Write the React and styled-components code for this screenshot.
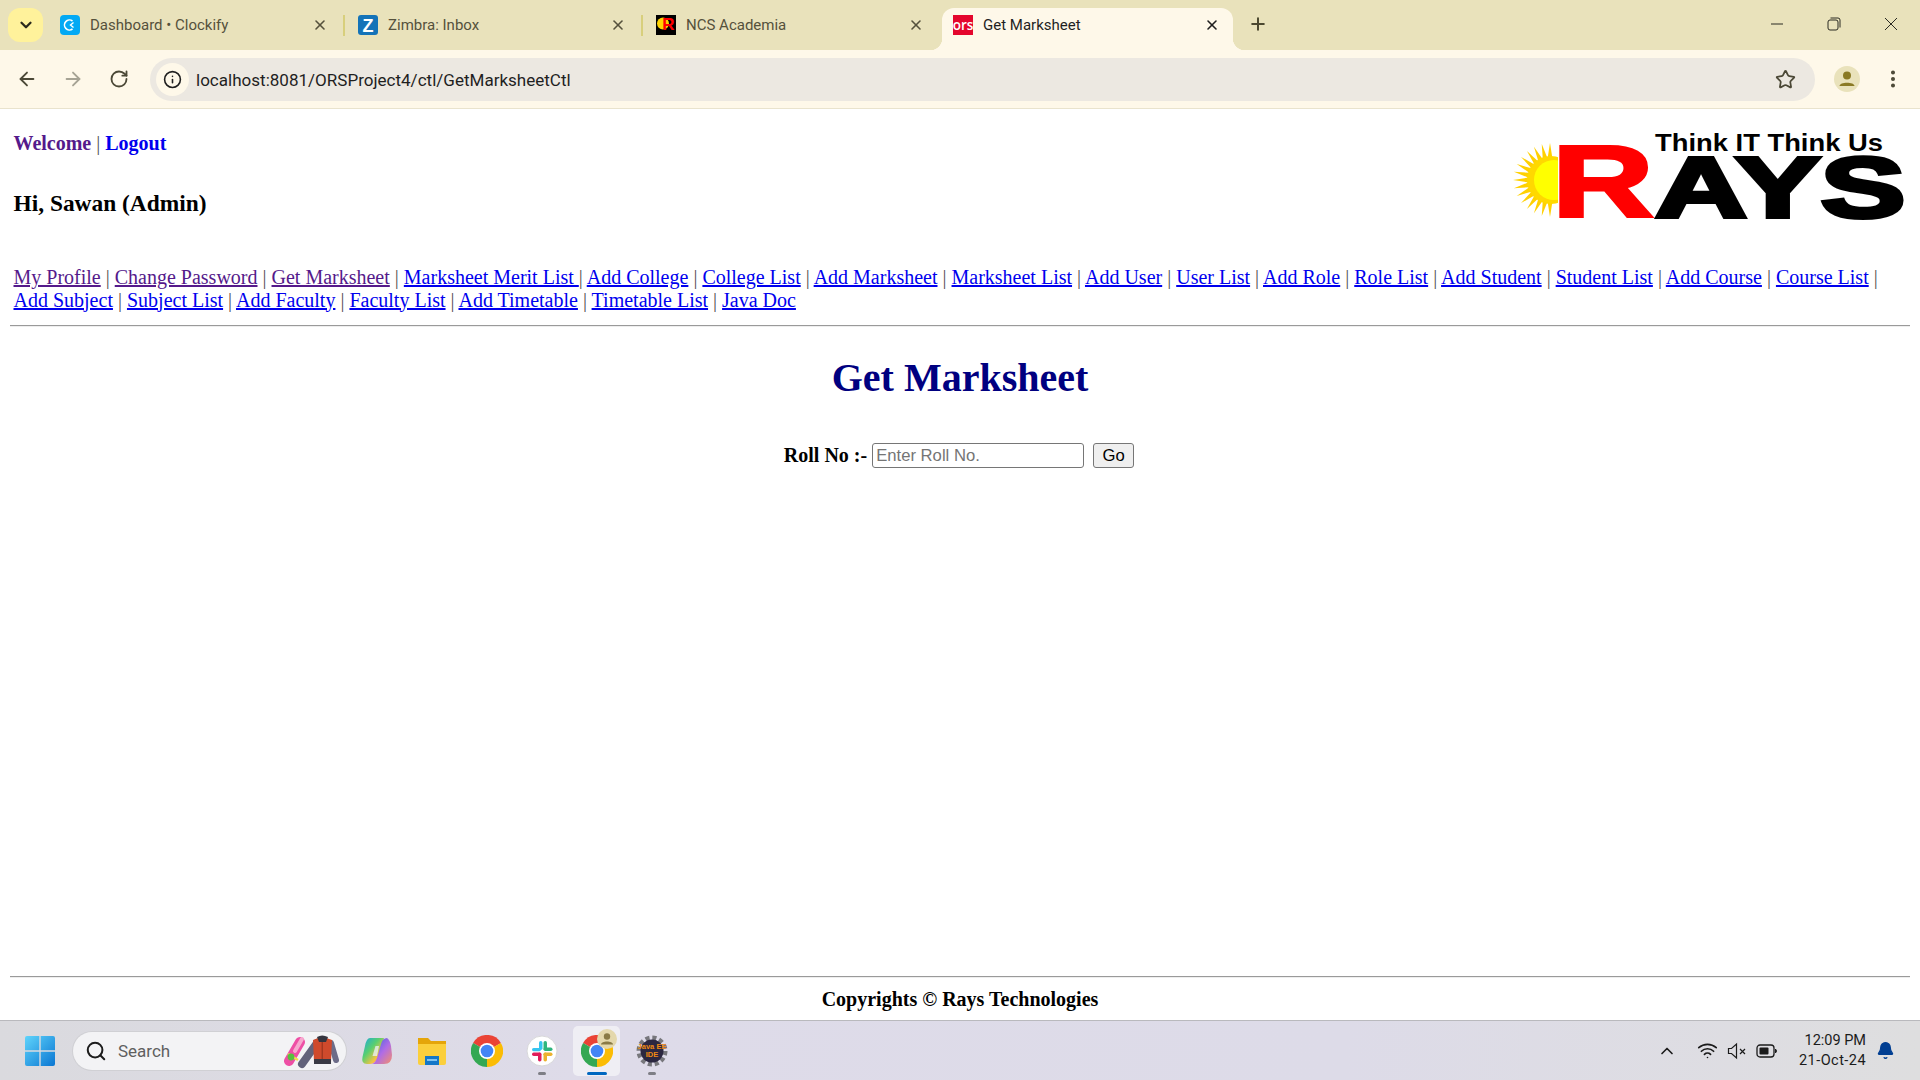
import styled, { createGlobalStyle } from "styled-components";
import {
  ArrowLeft,
  ArrowRight,
  RotateCw,
  Info,
  Star,
  EllipsisVertical,
  X,
  Plus,
  ChevronDown,
  ChevronUp,
  Search,
  Wifi,
  Bell,
} from "lucide-react";

const GlobalStyle = createGlobalStyle`
  html, body {
    margin: 0;
    padding: 0;
    height: 100%;
    background: #fff;
    overflow: hidden;
  }
  * { box-sizing: border-box; }
`;

const Screen = styled.div`
  width: 1920px;
  height: 1080px;
  display: flex;
  flex-direction: column;
`;

/* ---------- browser chrome ---------- */

const TabStrip = styled.div`
  height: 50px;
  flex: none;
  display: flex;
  align-items: flex-start;
  padding: 0 1px 0 8px;
  background: #e9e2bb;
  font-family: Roboto, "Open Sans", sans-serif;
  font-size: 15px;
`;

const TabSearch = styled.div`
  width: 35px;
  height: 34px;
  margin: 8px 5px 0 0;
  display: flex;
  align-items: center;
  justify-content: center;
  border-radius: 12px;
  background: #fff29b;
  color: #2b2a1c;
`;

const Tab = styled.div`
  position: relative;
  width: ${(p) => (p.$active ? "291px" : "298px")};
  height: 42px;
  margin-top: 8px;
  display: flex;
  align-items: center;
  gap: 10px;
  padding: 0 ${(p) => (p.$active ? "13px" : "18px")} 8px ${(p) => (p.$active ? "11px" : "12px")};
  border-radius: 12px 12px 0 0;
  background: ${(p) => (p.$active ? "#fef8e9" : "transparent")};
  color: ${(p) => (p.$active ? "#1f1f1f" : "#55513c")};

  ${(p) =>
    p.$sep &&
    `&::after {
      content: "";
      position: absolute;
      right: 1px;
      top: 7px;
      width: 2px;
      height: 21px;
      background: #d8cf7c;
    }`}

  ${(p) =>
    p.$active &&
    `&::before, &::after {
      content: "";
      position: absolute;
      bottom: 0;
      width: 12px;
      height: 12px;
    }
    &::before {
      left: -12px;
      background: radial-gradient(circle at 0 0, transparent 12px, #fef8e9 12.5px);
    }
    &::after {
      right: -12px;
      background: radial-gradient(circle at 100% 0, transparent 12px, #fef8e9 12.5px);
    }`}
`;

const TabTitle = styled.span`
  flex: 1;
  white-space: nowrap;
`;

const Favicon = styled.svg`
  width: 20px;
  height: 20px;
  flex: none;
`;

const TabClose = styled(X)`
  width: 16px;
  height: 16px;
  flex: none;
  stroke-width: 2.4;
`;

const NewTab = styled.div`
  margin: 14px 0 0 15px;
  width: 20px;
  height: 20px;
  color: #4c4830;
  display: flex;
`;

const WindowControls = styled.div`
  margin-left: auto;
  display: flex;
  color: #2a2a22;
`;

const WindowButton = styled.div`
  width: 57px;
  height: 48px;
  display: flex;
  align-items: center;
  justify-content: center;
`;

const Toolbar = styled.div`
  height: 59px;
  flex: none;
  display: flex;
  align-items: center;
  padding: 0 4px;
  background: #fef8e9;
  border-bottom: 1px solid #e9e3cd;
`;

const ToolButton = styled.div`
  width: 46px;
  height: 46px;
  flex: none;
  display: flex;
  align-items: center;
  justify-content: center;
  color: ${(p) => (p.$muted ? "#a6a394" : "#4b4836")};
`;

const AddressBar = styled.div`
  flex: 1;
  height: 43px;
  margin: 0 9px 0 8px;
  display: flex;
  align-items: center;
  gap: 7px;
  padding: 0 19px 0 6px;
  border-radius: 22px;
  background: #ece8e1;
`;

const InfoChip = styled.div`
  width: 33px;
  height: 33px;
  flex: none;
  border-radius: 50%;
  display: flex;
  align-items: center;
  justify-content: center;
  background: #fef8e9;
  color: #1f1f1f;
`;

const Url = styled.span`
  flex: 1;
  padding-top: 1px;
  font-family: Roboto, "Open Sans", sans-serif;
  font-size: 17.05px;
  color: #1f1f1f;
  white-space: nowrap;
`;

const Avatar = styled.svg`
  width: 26px;
  height: 26px;
`;

/* ---------- page ---------- */

const Page = styled.div`
  flex: 1;
  min-height: 0;
  display: flex;
  flex-direction: column;
  padding: 0 10px;
  background: #fff;
  color: #000;
  font-family: "Liberation Serif", "Times New Roman", serif;
  font-size: 20px;
`;

const Header = styled.div`
  display: flex;
  justify-content: space-between;
  align-items: flex-start;
  padding-left: 3.5px;
`;

const UserBox = styled.div`
  padding-top: 23px;
`;

const WelcomeLine = styled.div`
  font-weight: 700;
  line-height: 23px;
`;

const PlainLink = styled.a`
  color: ${(p) => (p.$visited ? "#551a8b" : "#0000ee")};
  text-decoration: none;
`;

const Pipe = styled.span`
  color: #555;
  font-weight: 400;
`;

const Greeting = styled.h3`
  margin: 35px 0 0;
  font-size: 23.4px;
  line-height: 27px;
  font-weight: 700;
`;

const Logo = styled.svg`
  width: 397px;
  height: 126px;
  margin-top: 4px;
  flex: none;
`;

const Nav = styled.nav`
  margin-top: 27px;
  padding-left: 3.5px;
  line-height: 22.5px;
`;

const NavLink = styled.a`
  color: ${(p) => (p.$visited ? "#551a8b" : "#0000ee")};
  text-decoration: underline;
`;

const Rule = styled.hr`
  width: 100%;
  height: 2px;
  margin: ${(p) => p.$margin};
  border: none;
  border-top: 1px solid #9a9a9a;
  border-bottom: 1px solid #eeeeee;
`;

const Title = styled.h1`
  margin: 28px 0 0;
  font-size: 40px;
  line-height: 46px;
  font-weight: 700;
  color: #000080;
  text-align: center;
`;

const RollRow = styled.form`
  margin-top: 42px;
  padding-right: 2px;
  display: flex;
  align-items: center;
  justify-content: center;
`;

const RollLabel = styled.label`
  font-weight: 700;
  margin-right: 5px;
`;

const RollInput = styled.input`
  width: 212px;
  height: 25px;
  padding: 1px 3px;
  border: 1px solid #767676;
  border-radius: 3px;
  font-family: "Liberation Sans", Arial, sans-serif;
  font-size: 16.67px;
  &::placeholder {
    color: #757575;
  }
`;

const GoButton = styled.button`
  width: 41px;
  height: 25px;
  margin-left: 9px;
  padding: 0;
  border: 1px solid #767676;
  border-radius: 3px;
  background: #efefef;
  color: #000;
  font-family: "Liberation Sans", Arial, sans-serif;
  font-size: 16.67px;
`;

const Footer = styled.footer`
  margin-top: auto;
  padding-bottom: 9px;
`;

const Copyright = styled.div`
  font-weight: 700;
  line-height: 23px;
  text-align: center;
`;

/* ---------- taskbar ---------- */

const Taskbar = styled.div`
  height: 60px;
  flex: none;
  display: flex;
  align-items: center;
  padding-left: 25px;
  border-top: 1px solid #b9b9bd;
  background: linear-gradient(90deg, #dadade 0%, #dedbe9 30%, #dddbe8 70%, #dededf 100%);
  font-family: Roboto, "Open Sans", sans-serif;
`;

const SearchPill = styled.div`
  width: 273px;
  height: 38px;
  margin: 0 3px 0 18px;
  display: flex;
  align-items: center;
  gap: 10px;
  padding: 0 7px 0 12px;
  border-radius: 19px;
  background: #f3f3f5;
  box-shadow: 0 0 0 1px #d0d0d4;
  color: #1c1c1c;
`;

const SearchText = styled.span`
  flex: 1;
  padding-left: 1px;
  font-size: 17px;
  color: #5f5f5f;
`;

const AppSlot = styled.div`
  position: relative;
  width: 55px;
  height: 50px;
  display: flex;
  align-items: center;
  justify-content: center;
  border-radius: 5px;

  ${(p) =>
    p.$active &&
    `&::before {
      content: "";
      position: absolute;
      inset: 0 4px;
      border-radius: 5px;
      background: #efeef4;
    }`}
`;

const AppIcon = styled.svg`
  position: relative;
  width: 32px;
  height: 32px;
`;

const ProfileBadge = styled.svg`
  position: absolute;
  top: 3px;
  right: 7px;
  width: 20px;
  height: 20px;
`;

const AppDot = styled.span`
  position: absolute;
  bottom: 1px;
  left: 50%;
  transform: translateX(-50%);
  width: ${(p) => (p.$active ? "20px" : "8px")};
  height: 3px;
  border-radius: 2px;
  background: ${(p) => (p.$active ? "#0067c0" : "#7e7e85")};
`;

const Tray = styled.div`
  margin-left: auto;
  display: flex;
  align-items: center;
  color: #1b1b1b;
`;

const TrayIcon = styled.div`
  width: 30px;
  height: 30px;
  display: flex;
  align-items: center;
  justify-content: center;
  margin-right: ${(p) => p.$gap || "0"};
`;

const Clock = styled.div`
  width: 84px;
  text-align: right;
  font-size: 14.5px;
  line-height: 20px;
  white-space: nowrap;
  color: #1b1b1b;
`;

const ClockDate = styled.div`
  letter-spacing: 0.45px;
`;

const BellSlot = styled.div`
  width: 38px;
  margin-right: 16px;
  display: flex;
  justify-content: center;
  color: #003e92;
`;

/* ---------- drawings ---------- */

function ChromeLogo() {
  return (
    <AppIcon viewBox="0 0 32 32">
      <path d="M16 16 L2.1 8 A16 16 0 0 1 29.9 8 Z" fill="#ea4335" />
      <path d="M16 16 L29.9 8 A16 16 0 0 1 16 32 Z" fill="#fbbc04" />
      <path d="M16 16 L16 32 A16 16 0 0 1 2.1 8 Z" fill="#34a853" />
      <circle cx="16" cy="16" r="8" fill="#fff" />
      <circle cx="16" cy="16" r="6.3" fill="#4285f4" />
    </AppIcon>
  );
}

function RaysLogo() {
  const spikes = Array.from({ length: 15 }, (_, i) => {
    const a = ((i * 180) / 14 + 90) * (Math.PI / 180);
    const b = a - 0.11;
    const c = a + 0.11;
    const cx = 37;
    const cy = 47;
    return `${cx + 22 * Math.cos(b)},${cy + 22 * Math.sin(b)} ${cx + 37 * Math.cos(a)},${cy + 37 * Math.sin(a)} ${cx + 22 * Math.cos(c)},${cy + 22 * Math.sin(c)}`;
  });
  return (
    <Logo viewBox="0 -20 397 126">
      {spikes.map((pts) => (
        <polygon key={pts} points={pts} fill="#ffd000" />
      ))}
      <circle cx="38" cy="47" r="24" fill="#ffd800" />
      <circle cx="41" cy="47" r="20" fill="#ffff00" />
      <rect x="45" y="8" width="20" height="80" fill="#fff" />
      <text
        transform="translate(39 84) scale(1.38 1)"
        fontFamily="Liberation Sans"
        fontWeight="700"
        fontSize="102"
        fill="#ff0000"
        stroke="#ff0000"
        strokeWidth="3"
      >
        R
      </text>
      <text
        transform="translate(142 84) scale(1.5 1)"
        fontFamily="Liberation Sans"
        fontWeight="700"
        fontSize="85"
        fill="#000"
        stroke="#000"
        strokeWidth="4"
      >
        AYS
      </text>
      <text
        transform="translate(142 18) scale(1.19 1)"
        fontFamily="Liberation Sans"
        fontWeight="700"
        fontSize="23"
        fill="#000"
      >
        Think IT Think Us
      </text>
    </Logo>
  );
}

const NAV_LINKS = [
  { label: "My Profile", visited: true },
  { label: "Change Password", visited: true },
  { label: "Get Marksheet", visited: true },
  { label: "Marksheet Merit List " },
  { label: "Add College" },
  { label: "College List" },
  { label: "Add Marksheet" },
  { label: "Marksheet List" },
  { label: "Add User" },
  { label: "User List" },
  { label: "Add Role" },
  { label: "Role List" },
  { label: "Add Student" },
  { label: "Student List" },
  { label: "Add Course" },
  { label: "Course List" },
  { label: "Add Subject" },
  { label: "Subject List" },
  { label: "Add Faculty" },
  { label: "Faculty List" },
  { label: "Add Timetable" },
  { label: "Timetable List" },
  { label: "Java Doc" },
];

function App() {
  return (
    <Screen>
      <GlobalStyle />
      <TabStrip>
        <TabSearch>
          <ChevronDown size={18} strokeWidth={3} />
        </TabSearch>
        <Tab $sep>
          <Favicon viewBox="0 0 20 20">
            <rect width="20" height="20" rx="4" fill="#03a9f4" />
            <path d="M12.5 6 A5 5 0 1 0 12.5 14" fill="none" stroke="#fff" strokeWidth="1.6" />
            <path d="M13.5 7.5 L10.5 10 L13.5 12.5" fill="none" stroke="#fff" strokeWidth="1.4" />
          </Favicon>
          <TabTitle>Dashboard • Clockify</TabTitle>
          <TabClose />
        </Tab>
        <Tab $sep>
          <Favicon viewBox="0 0 20 20">
            <rect width="20" height="20" rx="3" fill="#1473b8" />
            <text x="10" y="16.5" textAnchor="middle" fontFamily="Liberation Sans" fontWeight="700" fontSize="18" fill="#fff">
              Z
            </text>
          </Favicon>
          <TabTitle>Zimbra: Inbox</TabTitle>
          <TabClose />
        </Tab>
        <Tab>
          <Favicon viewBox="0 0 20 20">
            <rect width="20" height="20" fill="#000" />
            <circle cx="7" cy="8.5" r="6" fill="#ffd400" />
            <text x="12.5" y="15" textAnchor="middle" fontFamily="Liberation Sans" fontWeight="700" fontSize="17" fill="#ff0000">
              R
            </text>
          </Favicon>
          <TabTitle>NCS Academia</TabTitle>
          <TabClose />
        </Tab>
        <Tab $active>
          <Favicon viewBox="0 0 20 20">
            <rect width="20" height="20" fill="#e4062d" />
            <text x="10" y="14.5" textAnchor="middle" fontFamily="Open Sans" fontWeight="600" fontSize="13.5" fill="#fff">
              ors
            </text>
          </Favicon>
          <TabTitle>Get Marksheet</TabTitle>
          <TabClose />
        </Tab>
        <NewTab>
          <Plus size={20} strokeWidth={2.4} />
        </NewTab>
        <WindowControls>
          <WindowButton>
            <svg width="14" height="14" viewBox="0 0 14 14">
              <path d="M1 7 H13" stroke="currentColor" strokeWidth="1" />
            </svg>
          </WindowButton>
          <WindowButton>
            <svg width="14" height="14" viewBox="0 0 14 14" fill="none" stroke="currentColor">
              <rect x="1" y="3" width="10" height="10" rx="2" />
              <path d="M3.5 1 H11 A2 2 0 0 1 13 3 V10.5" />
            </svg>
          </WindowButton>
          <WindowButton>
            <svg width="14" height="14" viewBox="0 0 14 14">
              <path d="M1 1 L13 13 M13 1 L1 13" stroke="currentColor" strokeWidth="1" />
            </svg>
          </WindowButton>
        </WindowControls>
      </TabStrip>

      <Toolbar>
        <ToolButton>
          <ArrowLeft size={22} />
        </ToolButton>
        <ToolButton $muted>
          <ArrowRight size={22} />
        </ToolButton>
        <ToolButton>
          <RotateCw size={20} strokeWidth={2.2} />
        </ToolButton>
        <AddressBar>
          <InfoChip>
            <Info size={19} />
          </InfoChip>
          <Url>localhost:8081/ORSProject4/ctl/GetMarksheetCtl</Url>
          <Star size={21} color="#4b4836" strokeWidth={2} />
        </AddressBar>
        <ToolButton>
          <Avatar viewBox="0 0 26 26">
            <circle cx="13" cy="13" r="13" fill="#e9e2bb" />
            <circle cx="13" cy="9.5" r="4" fill="#8a7a25" />
            <path d="M5.5 20 C5.5 15.5 20.5 15.5 20.5 20 Z" fill="#8a7a25" />
          </Avatar>
        </ToolButton>
        <ToolButton>
          <EllipsisVertical size={22} strokeWidth={2.4} />
        </ToolButton>
      </Toolbar>

      <Page>
        <Header>
          <UserBox>
            <WelcomeLine>
              <PlainLink $visited href="#">
                Welcome
              </PlainLink>{" "}
              <Pipe>|</Pipe> <PlainLink href="#">Logout</PlainLink>
            </WelcomeLine>
            <Greeting>Hi, Sawan (Admin)</Greeting>
          </UserBox>
          <RaysLogo />
        </Header>

        <Nav>
          {NAV_LINKS.map((link, i) => (
            <span key={link.label}>
              <NavLink href="#" $visited={link.visited}>
                {link.label}
              </NavLink>
              {i < NAV_LINKS.length - 1 && (
                <>
                  {link.label.endsWith(" ") ? "" : " "}
                  <Pipe>|</Pipe>{" "}
                </>
              )}
            </span>
          ))}
        </Nav>

        <Rule $margin="14px 0 0" />
        <Title>Get Marksheet</Title>

        <RollRow>
          <RollLabel>Roll No :-</RollLabel>
          <RollInput placeholder="Enter Roll No." />
          <GoButton type="button">Go</GoButton>
        </RollRow>

        <Footer>
          <Rule $margin="0 0 10px" />
          <Copyright>Copyrights © Rays Technologies</Copyright>
        </Footer>
      </Page>

      <Taskbar>
        <svg width="30" height="30" viewBox="0 0 30 30">
          <defs>
            <linearGradient id="win" x1="0" y1="0" x2="1" y2="1">
              <stop offset="0" stopColor="#5fd4fb" />
              <stop offset="1" stopColor="#0a76d2" />
            </linearGradient>
          </defs>
          <path d="M0 2 A2 2 0 0 1 2 0 H14.3 V14.3 H0 Z M15.7 0 H28 A2 2 0 0 1 30 2 V14.3 H15.7 Z M0 15.7 H14.3 V30 H2 A2 2 0 0 1 0 28 Z M15.7 15.7 H30 V28 A2 2 0 0 1 28 30 H15.7 Z" fill="url(#win)" />
        </svg>
        <SearchPill>
          <Search size={22} strokeWidth={2.2} />
          <SearchText>Search</SearchText>
          <svg width="56" height="36" viewBox="0 0 56 36" fill="none">
            <path d="M6 28 L17 9" stroke="#ee4fa5" strokeWidth="10" strokeLinecap="round" />
            <path d="M12 18 L19 6" stroke="#f7a8cf" strokeWidth="4" strokeLinecap="round" />
            <path d="M5 21 L15 27" stroke="#f4e04d" strokeWidth="2.5" />
            <circle cx="8" cy="24" r="3.4" fill="#57c03f" />
            <path d="M34 10 L19 31" stroke="#62627a" strokeWidth="8" strokeLinecap="round" />
            <path d="M48 10 L53 27" stroke="#6c6c88" strokeWidth="6" strokeLinecap="round" />
            <path d="M30 7 Q39 2 49 7 L48 29 H31 Z" fill="#cf4a2c" />
            <path d="M34 4 Q39 1 45 4 L43 9 H36 Z" fill="#34343e" />
            <path d="M31 26 H48 V31 H31 Z" fill="#3a3a44" />
            <path d="M39.2 9 V26" stroke="#8e2f1c" strokeWidth="1" />
          </svg>
        </SearchPill>
        <AppSlot>
          <AppIcon viewBox="0 0 32 32">
            <defs>
              <linearGradient id="cop" x1="0" y1="0" x2="1" y2="1">
                <stop offset="0" stopColor="#19a7e0" />
                <stop offset="0.4" stopColor="#58cf70" />
                <stop offset="0.7" stopColor="#f5c342" />
                <stop offset="1" stopColor="#ee5fa8" />
              </linearGradient>
              <linearGradient id="cop2" x1="0" y1="0" x2="1" y2="1">
                <stop offset="0" stopColor="#2f62e0" />
                <stop offset="0.55" stopColor="#b06ce6" />
                <stop offset="1" stopColor="#f4906a" />
              </linearGradient>
            </defs>
            <path d="M9 3 H23 L17 22 Q15 29 9 29 H6 Q0 29 1.5 22 L4 11 Q5.5 3 9 3 Z" fill="url(#cop)" />
            <path d="M23 29 H10 Q14 29 16 23 L20 9 Q21.5 3 26 3 Q29 5 30 11 L31 20 Q31 29 23 29 Z" fill="url(#cop2)" />
            <path d="M18 11 H14.5 L11.5 21 H16 Z" fill="#eef2fb" opacity="0.75" />
          </AppIcon>
        </AppSlot>
        <AppSlot>
          <AppIcon viewBox="0 0 32 32">
            <path d="M2 3 H12 L15 6 H30 V28 H2 Z" fill="#e5a50a" />
            <path d="M2 9 H30 V28 A2 2 0 0 1 28 30 H4 A2 2 0 0 1 2 28 Z" fill="#fbcf3c" />
            <rect x="9" y="21" width="14" height="9" fill="#1477c8" />
            <rect x="11" y="24" width="10" height="2" fill="#7fc3f0" />
          </AppIcon>
        </AppSlot>
        <AppSlot>
          <ChromeLogo />
        </AppSlot>
        <AppSlot>
          <AppIcon viewBox="0 0 32 32">
            <circle cx="16" cy="16" r="15" fill="#fff" stroke="#d8d8da" />
            <rect x="13" y="6" width="3.5" height="9" rx="1.7" fill="#36c5f0" />
            <rect x="6" y="13" width="9" height="3.2" rx="1.6" fill="#36c5f0" />
            <rect x="17.5" y="6" width="3.5" height="9" rx="1.7" fill="#2eb67d" />
            <rect x="17.5" y="12.5" width="9" height="3.5" rx="1.7" fill="#2eb67d" />
            <rect x="6" y="17.5" width="9" height="3.5" rx="1.7" fill="#e01e5a" />
            <rect x="12" y="17.5" width="3.5" height="9" rx="1.7" fill="#e01e5a" />
            <rect x="17.5" y="17.5" width="9" height="3.5" rx="1.7" fill="#ecb22e" />
            <rect x="17.5" y="17.5" width="3.5" height="9" rx="1.7" fill="#ecb22e" />
          </AppIcon>
          <AppDot />
        </AppSlot>
        <AppSlot $active>
          <ChromeLogo />
          <ProfileBadge viewBox="0 0 20 20">
            <circle cx="10" cy="10" r="10" fill="#e4d8ac" />
            <circle cx="10" cy="7.5" r="3.2" fill="#8a7a45" />
            <path d="M4 15.5 C4 11.5 16 11.5 16 15.5 Z" fill="#8a7a45" />
          </ProfileBadge>
          <AppDot $active />
        </AppSlot>
        <AppSlot>
          <AppIcon viewBox="0 0 32 32">
            <circle cx="16" cy="16" r="13" fill="none" stroke="#77777c" strokeWidth="5" strokeDasharray="4 2.8" />
            <circle cx="16" cy="16" r="11.5" fill="#2b2740" />
            <text x="16" y="14" textAnchor="middle" fontFamily="Liberation Sans" fontWeight="700" fontSize="7.5" fill="#f08a12">
              Java EE
            </text>
            <text x="16" y="22" textAnchor="middle" fontFamily="Liberation Sans" fontWeight="700" fontSize="7.5" fill="#f08a12">
              IDE
            </text>
          </AppIcon>
          <AppDot />
        </AppSlot>

        <Tray>
          <TrayIcon $gap="10px">
            <ChevronUp size={20} strokeWidth={2} />
          </TrayIcon>
          <TrayIcon>
            <Wifi size={21} strokeWidth={1.9} />
          </TrayIcon>
          <TrayIcon>
            <svg width="20" height="20" viewBox="0 0 20 20" fill="none" stroke="currentColor" strokeWidth="1.2">
              <path d="M1.5 7.5 H4.5 L9.5 3 V17 L4.5 12.5 H1.5 Z" />
              <path d="M13 8 L18 13 M18 8 L13 13" />
            </svg>
          </TrayIcon>
          <TrayIcon>
            <svg width="22" height="16" viewBox="0 0 22 16">
              <rect x="1" y="2" width="17" height="12" rx="3" fill="none" stroke="currentColor" strokeWidth="1.3" />
              <rect x="3.5" y="4.5" width="9" height="7" rx="1" fill="currentColor" />
              <path d="M19.5 6 Q21.5 8 19.5 10 Z" fill="currentColor" stroke="currentColor" />
            </svg>
          </TrayIcon>
          <Clock>
            <div>12:09 PM</div>
            <ClockDate>21-Oct-24</ClockDate>
          </Clock>
          <BellSlot>
            <Bell size={19} fill="currentColor" strokeWidth={1.5} />
          </BellSlot>
        </Tray>
      </Taskbar>
    </Screen>
  );
}

export default App;
